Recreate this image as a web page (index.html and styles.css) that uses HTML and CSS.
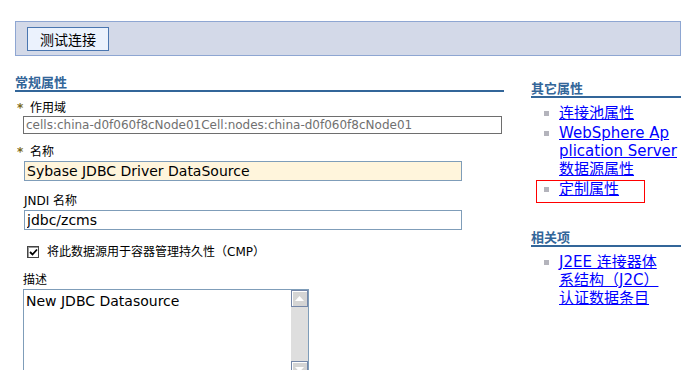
FILE: index.html
```html
<!DOCTYPE html>
<html lang="zh-CN">
<head>
  <meta charset="UTF-8">
  <title>数据源</title>
  <link rel="stylesheet" href="styles.css">
</head>
<body>
  <div class="page">
    <!-- Toolbar -->
    <div class="toolbar">
      <button class="btn">测试连接</button>
    </div>

    <div class="columns">
      <!-- General properties -->
      <div class="main">
        <h2 class="section-title">常规属性</h2>

        <div class="label label-req first"><span class="req">*</span>作用域</div>
        <input class="field field-readonly" type="text" readonly value="cells:china-d0f060f8cNode01Cell:nodes:china-d0f060f8cNode01">

        <div class="label label-req"><span class="req">*</span>名称</div>
        <input class="field field-name field-required" type="text" value="Sybase JDBC Driver DataSource">

        <div class="label label-plain spaced">JNDI 名称</div>
        <input class="field field-name" type="text" value="jdbc/zcms">

        <div class="check-row">
          <span class="checkbox">
            <svg width="9" height="9" viewBox="0 0 9 9"><path d="M1 4 L3.5 6.5 L8 1.5" fill="none" stroke="#000" stroke-width="1.8"/></svg>
          </span>
          将此数据源用于容器管理持久性（CMP）
        </div>

        <div class="label label-desc">描述</div>
        <div class="textarea">
          <div class="textarea-text">New JDBC Datasource</div>
          <div class="scrollbar">
            <div class="sb-btn">
              <svg width="9" height="5" viewBox="0 0 9 5"><path d="M0 5 L4.5 0 L9 5 Z" fill="#fff"/></svg>
            </div>
            <div class="sb-track"></div>
            <div class="sb-btn">
              <svg width="9" height="5" viewBox="0 0 9 5"><path d="M0 0 L4.5 5 L9 0 Z" fill="#fff"/></svg>
            </div>
          </div>
        </div>
      </div>

      <!-- Side links -->
      <div class="side">
        <h2 class="section-title">其它属性</h2>
        <ul class="links">
          <li><a href="#">连接池属性</a></li>
          <li><a href="#">WebSphere Ap<br>plication Server<br>数据源属性</a></li>
          <li class="marked"><a href="#">定制属性</a><span class="mark-box"></span></li>
        </ul>

        <h2 class="section-title related">相关项</h2>
        <ul class="links">
          <li><a href="#">J2EE 连接器体<br>系结构（J2C）<br>认证数据条目</a></li>
        </ul>
      </div>
    </div>
  </div>
</body>
</html>
```

FILE: styles.css
```css
html, body {
  margin: 0;
  padding: 0;
  background: #fff;
  overflow: hidden;
}

body {
  font-family: "DejaVu Sans", "Noto Sans CJK SC", sans-serif;
  color: #000;
}

.page {
  padding: 21px 15px 0 15px;
  width: 666px;
}

/* Toolbar */
.toolbar {
  background: #d3d9e8;
  border: 1px solid #8ea6d2;
  padding: 5px 11px 4px 11px;
}

.btn {
  display: block;
  width: 82px;
  height: 24px;
  padding: 0;
  background: #ebf2fd;
  border: 1px solid #4a76b0;
  border-radius: 0;
  font-family: "Noto Sans CJK SC", sans-serif;
  font-size: 14px;
  line-height: 20px;
  color: #000;
}

.columns {
  display: flex;
  gap: 27px;
}

.main {
  width: 489px;
  display: flex;
  flex-direction: column;
  align-items: flex-start;
}

.side {
  width: 150px;
}

.section-title {
  margin: 18px 0 0 0;
  width: 100%;
  font-size: 13px;
  line-height: 16px;
  font-weight: bold;
  color: #336699;
  font-family: "Noto Sans CJK SC", sans-serif;
  border-bottom: 2px solid #336699;
}

/* Labels and fields */
.label {
  font-size: 12px;
  line-height: 16px;
  margin-top: 10px;
}

.label.first {
  margin-top: 8px;
}

.label.spaced {
  margin-top: 12px;
}

.label-req {
  padding-left: 2px;
}

.req {
  display: inline-block;
  width: 13px;
  color: #7a6a20;
  font-weight: bold;
}

.label-plain {
  margin-left: 9px;
}

.label-desc {
  margin-top: 12px;
  margin-left: 8px;
}

.field {
  box-sizing: border-box;
  margin: 1px 0 0 9px;
  width: 438px;
  height: 20px;
  padding: 0 2px;
  border: 1px solid #7f9db9;
  font-family: "DejaVu Sans", sans-serif;
  font-size: 14px;
  color: #000;
  background: #fff;
  outline: none;
}

.field-readonly {
  margin: 0 0 0 8px;
  width: 479px;
  height: 18px;
  font-size: 12px;
  color: #707070;
  border-color: #6e6e6e;
}

.field-required {
  background: #fff5dc;
}

/* Checkbox row */
.check-row {
  margin: 14px 0 0 12px;
  font-size: 12px;
  line-height: 16px;
  display: flex;
  align-items: center;
  gap: 8px;
}

.checkbox {
  box-sizing: border-box;
  width: 12px;
  height: 12px;
  border: 1px solid #444;
  box-shadow: inset 1px 1px 0 #999;
  background: #fff;
  display: flex;
  align-items: center;
  justify-content: center;
}

/* Description box */
.textarea {
  margin: 1px 0 0 8px;
  width: 286px;
  height: 90px;
  box-sizing: border-box;
  border: 1px solid #7f9db9;
  display: flex;
}

.textarea-text {
  flex: 1;
  padding: 2px 2px;
  font-size: 14px;
  line-height: 18px;
}

.scrollbar {
  width: 17px;
  background: #dedede;
  display: flex;
  flex-direction: column;
}

.sb-btn {
  box-sizing: border-box;
  height: 17px;
  background: #d4d4d4;
  border: 1px solid #7486a8;
  box-shadow: inset 1px 1px 0 #fff;
  display: flex;
  align-items: center;
  justify-content: center;
}

.sb-track {
  flex: 1;
}

/* Side links */
.side .section-title {
  margin-top: 24px;
}

.side .section-title.related {
  margin-top: 31px;
}

.links {
  list-style: none;
  margin: 6px 0 0 0;
  padding: 0;
}

.links li {
  position: relative;
  padding-left: 28px;
  margin-bottom: 2px;
  font-size: 15px;
  line-height: 18px;
}

.links li::before {
  content: "";
  position: absolute;
  left: 13px;
  top: 7px;
  width: 5px;
  height: 5px;
  background: #b4b4bc;
}

.links a {
  color: #0000ff;
  text-decoration: underline;
}

.mark-box {
  position: absolute;
  left: 5px;
  top: 0;
  width: 109px;
  height: 23px;
  box-sizing: border-box;
  border: 1px solid #ff0000;
}
```
